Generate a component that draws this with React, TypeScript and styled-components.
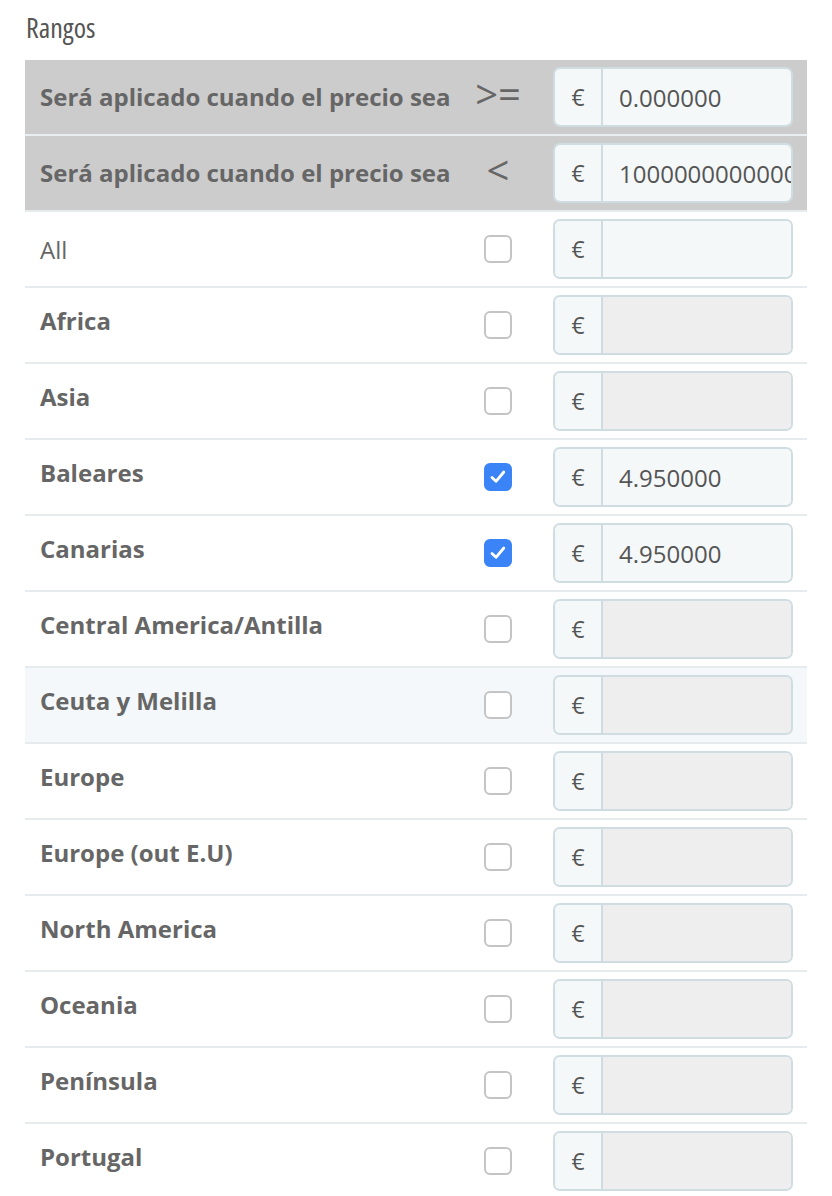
import React from "react";
import styled, { createGlobalStyle } from "styled-components";

const Global = createGlobalStyle`
    body {
        margin: 0;
        background: #ffffff;
        font-family: "Open Sans", "DejaVu Sans", sans-serif;
        color: #666666;
    }
`

const Page = styled.div`
    padding: 0 25px;
`
const Title = styled.h3`
    margin: 0;
    padding: 9px 0 15px 1px;
    font-size: 28px;
    line-height: 36px;
    font-weight: 400;
    font-stretch: 85%;
    color: #555555;
`
const Table = styled.div`
    display: flex;
    flex-direction: column;
`
const Row = styled.div<{ $head?: boolean; $hover?: boolean }>`
    display: grid;
    grid-template-columns: minmax(0, 1fr) 72px 240px;
    column-gap: 19px;
    align-items: center;
    height: 76px;
    box-sizing: border-box;
    padding: 0 14px 0 15px;
    border-top: 2px solid ${p => (p.$head ? "#e9eef0" : "#e6ebee")};
    background: ${p => (p.$head ? "#cccccc" : p.$hover ? "#f4f8fa" : "#ffffff")};

    &:first-child {
        border-top: none;
        height: 74px;
    }
`
const Label = styled.div<{ $bold?: boolean; $head?: boolean }>`
    font-size: 24px;
    font-weight: ${p => (p.$bold ? 700 : 400)};
    color: #666666;
    padding-bottom: ${p => (p.$head ? "2px" : p.$bold ? "9px" : "0")};
    white-space: nowrap;
`
const Operator = styled.div`
    text-align: center;
    font-size: 40px;
    line-height: 1;
    font-weight: 500;
    color: #666666;
    padding-bottom: 6px;
`
const CheckCell = styled.div`
    display: flex;
    justify-content: center;
`
const Box = styled.span<{ $checked?: boolean }>`
    width: 28px;
    height: 28px;
    box-sizing: border-box;
    border-radius: 6px;
    display: flex;
    align-items: center;
    justify-content: center;
    background: ${p => (p.$checked ? "#3a84f7" : "#ffffff")};
    border: ${p => (p.$checked ? "none" : "2px solid #c4c4c4")};
`
const Group = styled.div`
    display: flex;
    height: 60px;
    box-sizing: border-box;
    border: 2px solid #cfdde2;
    border-radius: 7px;
    overflow: hidden;
`
const Addon = styled.span`
    width: 46px;
    flex-shrink: 0;
    display: flex;
    align-items: center;
    justify-content: center;
    background: #f4f8f9;
    border-right: 2px solid #cfdde2;
    font-size: 23px;
    color: #555555;
`
const Field = styled.div<{ $disabled?: boolean }>`
    flex: 1;
    min-width: 0;
    display: flex;
    align-items: center;
    padding-left: 16px;
    background: ${p => (p.$disabled ? "#eeeeee" : "#f4f8f9")};
    font-size: 24px;
    color: #555555;
    overflow: hidden;
    white-space: nowrap;
`

const Check = ({ checked }: { checked?: boolean }) => (
    <CheckCell>
        <Box $checked={checked}>
            {checked && (
                <svg width="20" height="20" viewBox="0 0 20 20">
                    <path d="M4 10.5 L8 14.3 L15.8 5" fill="none" stroke="#fff" strokeWidth="2.8" strokeLinecap="round" strokeLinejoin="round" />
                </svg>
            )}
        </Box>
    </CheckCell>
)

const Price = ({ value, disabled }: { value?: string; disabled?: boolean }) => (
    <Group>
        <Addon>€</Addon>
        <Field $disabled={disabled}>{value}</Field>
    </Group>
)

const zonas = [
    { nombre: "Africa" },
    { nombre: "Asia" },
    { nombre: "Baleares", valor: "4.950000" },
    { nombre: "Canarias", valor: "4.950000" },
    { nombre: "Central America/Antilla" },
    { nombre: "Ceuta y Melilla", hover: true },
    { nombre: "Europe" },
    { nombre: "Europe (out E.U)" },
    { nombre: "North America" },
    { nombre: "Oceania" },
    { nombre: "Península" },
    { nombre: "Portugal" },
]

const App = () => {
    return (
        <Page>
            <Global />
            <Title>Rangos</Title>
            <Table>
                <Row $head>
                    <Label $bold $head>Será aplicado cuando el precio sea</Label>
                    <Operator>&gt;=</Operator>
                    <Price value="0.000000" />
                </Row>
                <Row $head>
                    <Label $bold $head>Será aplicado cuando el precio sea</Label>
                    <Operator>&lt;</Operator>
                    <Price value="10000000000000" />
                </Row>
                <Row>
                    <Label>All</Label>
                    <Check />
                    <Price />
                </Row>
                {zonas.map(z => (
                    <Row key={z.nombre} $hover={z.hover}>
                        <Label $bold>{z.nombre}</Label>
                        <Check checked={!!z.valor} />
                        <Price value={z.valor} disabled={!z.valor} />
                    </Row>
                ))}
            </Table>
        </Page>
    )
}

export default App;
